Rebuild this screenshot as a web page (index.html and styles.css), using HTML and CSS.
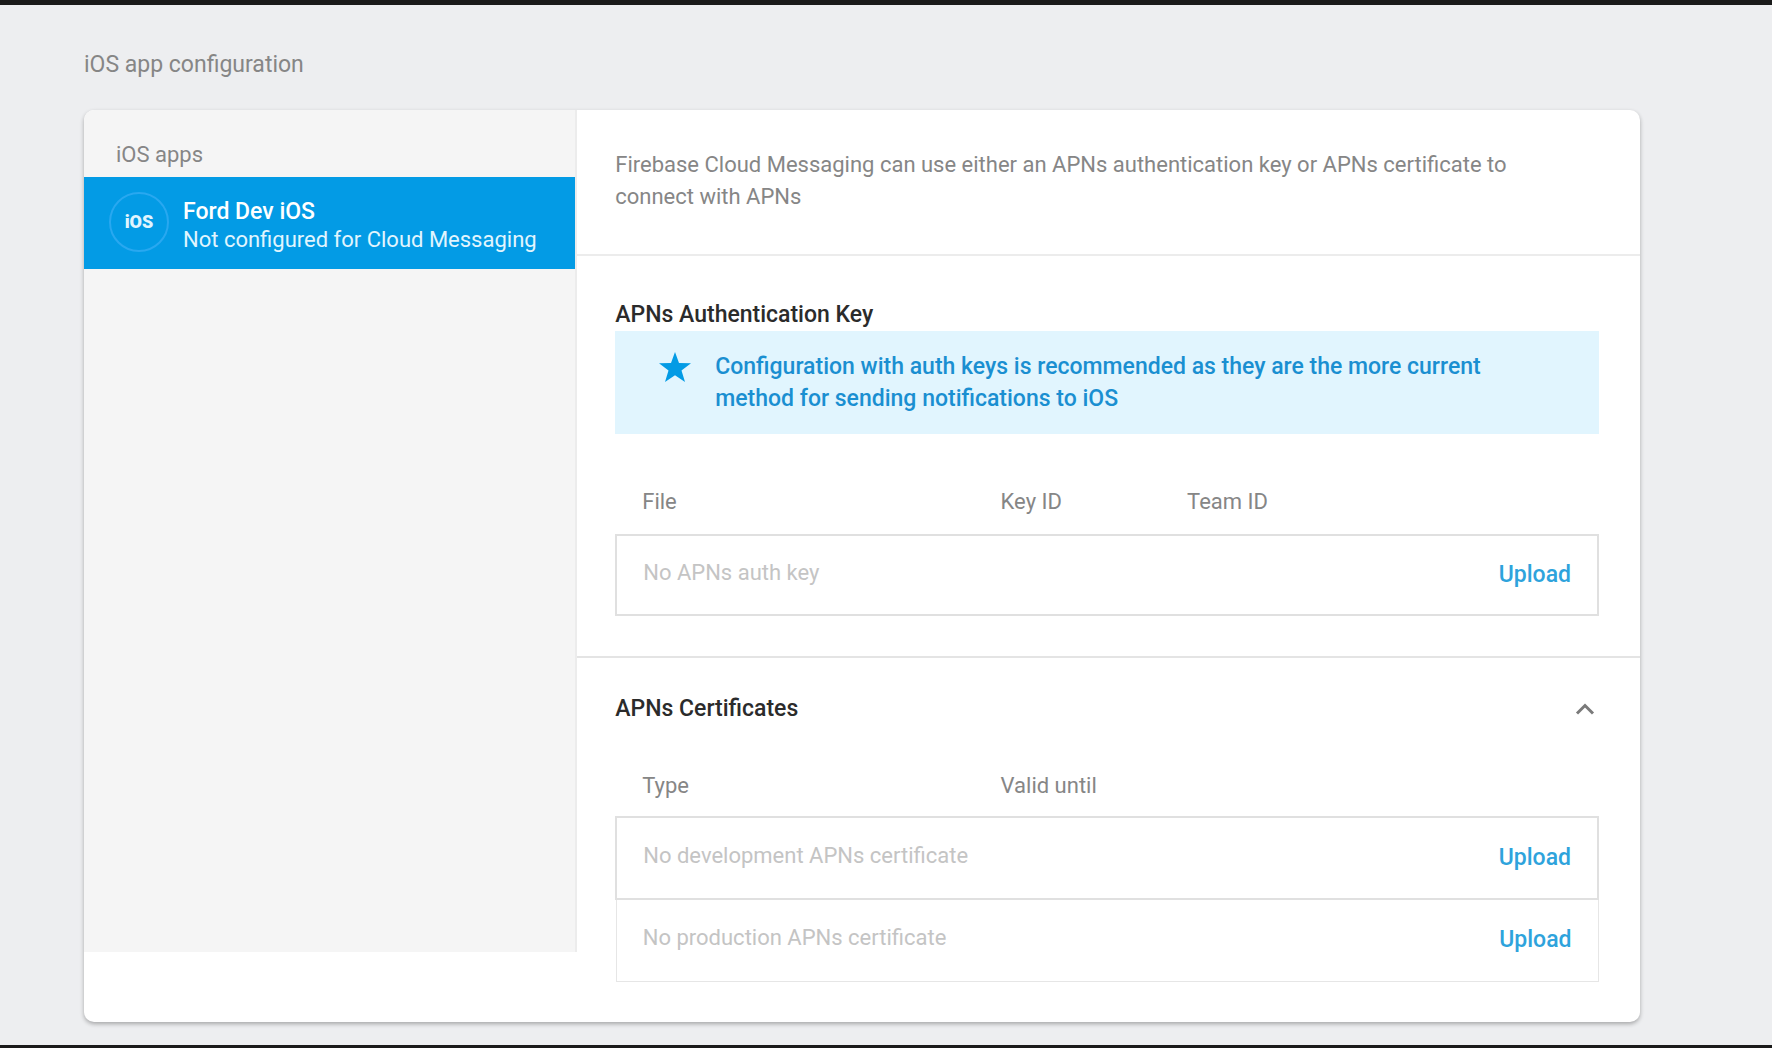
FILE: index.html
```html
<!doctype html>
<html lang="en">

<head>
    <meta charset="UTF-8">
    <meta name="viewport" content="width=device-width, initial-scale=1.0">
    <title>Cloud Messaging settings</title>
    <link rel="stylesheet" href="styles.css">
</head>

<body>
    <main class="page">
        <h1 class="page-title">iOS app configuration</h1>

        <div class="card">
            <!-- App list -->
            <nav class="sidebar" aria-labelledby="apps-label">
                <h2 class="sidebar-title" id="apps-label">iOS apps</h2>
                <a href="#" class="app active">
                    <span class="app-icon">iOS</span>
                    <span class="app-info">
                        <span class="app-name">Ford Dev iOS</span>
                        <span class="app-status">Not configured for Cloud Messaging</span>
                    </span>
                </a>
            </nav>

            <div class="content">
                <section class="intro">
                    <p>Firebase Cloud Messaging can use either an APNs authentication key or APNs certificate to connect with APNs</p>
                </section>

                <!-- Authentication key -->
                <section class="auth-key">
                    <h3>APNs Authentication Key</h3>
                    <div class="banner">
                        <svg class="star" viewBox="0 0 32 30" aria-hidden="true">
                            <path d="M16 0l4 11 12 .3-9.500 7.200L26 30l-10-6.700L6 30l3.500-11.500L0 11.300l12-.3z" />
                        </svg>
                        <p>Configuration with auth keys is recommended as they are the more current method for sending notifications to iOS</p>
                    </div>
                    <table>
                        <thead>
                            <tr>
                                <th class="col-main">File</th>
                                <th class="col-id">Key ID</th>
                                <th>Team ID</th>
                                <th></th>
                            </tr>
                        </thead>
                        <tbody>
                            <tr>
                                <td colspan="3">No APNs auth key</td>
                                <td class="action"><button type="button">Upload</button></td>
                            </tr>
                        </tbody>
                    </table>
                </section>

                <!-- Certificates -->
                <section class="certificates">
                    <div class="section-head">
                        <h3>APNs Certificates</h3>
                        <button type="button" class="toggle" aria-label="Collapse" aria-expanded="true">
                            <svg viewBox="0 0 20 12" aria-hidden="true">
                                <path d="M2 10.500l8-8 8 8" />
                            </svg>
                        </button>
                    </div>
                    <table>
                        <thead>
                            <tr>
                                <th class="col-main">Type</th>
                                <th>Valid until</th>
                                <th></th>
                            </tr>
                        </thead>
                        <tbody>
                            <tr>
                                <td colspan="2">No development APNs certificate</td>
                                <td class="action"><button type="button">Upload</button></td>
                            </tr>
                            <tr class="light">
                                <td colspan="2">No production APNs certificate</td>
                                <td class="action"><button type="button">Upload</button></td>
                            </tr>
                        </tbody>
                    </table>
                </section>
            </div>
        </div>
    </main>
</body>

</html>
```
FILE: styles.css
```css
* {
    box-sizing: border-box;
}

body {
    margin: 0;
    min-height: 100vh;
    border-top: 5px solid #1a1a1a;
    border-bottom: 3px solid #1a1a1a;
    background-color: #edeef0;
    color: #868686;
    font-family: Roboto, sans-serif;
    font-size: 22px;
    line-height: 32px;
}

h1,
h2,
h3,
p {
    margin: 0;
    font-size: 22px;
    font-weight: 400;
}

h3 {
    color: #2b2b2b;
    font-size: 23px;
    font-weight: 500;
}

button {
    padding: 0;
    border: none;
    background: none;
    font: inherit;
    cursor: pointer;
}

.page {
    padding: 44px 132px 22px 84px;
}

.page-title {
    margin-bottom: 29px;
    font-size: 23px;
}

.card {
    display: grid;
    grid-template-columns: 31.7% 1fr;
    border-radius: 10px;
    background-color: #fff;
    box-shadow: 0 2px 4px rgba(0, 0, 0, 0.3);
}

/* App list */
.sidebar {
    margin-bottom: 70px;
    border-right: 2px solid #ececec;
    border-radius: 10px 0 0 0;
    background-color: #f5f5f5;
}

.sidebar-title {
    padding: 29px 32px 6px;
}

.app {
    display: flex;
    align-items: flex-start;
    gap: 14px;
    padding: 15px 25px;
    color: #e1f5fe;
    line-height: 28px;
    text-decoration: none;
}

.app.active {
    background-color: #039be5;
}

.app-icon {
    display: flex;
    flex-shrink: 0;
    align-items: center;
    justify-content: center;
    width: 60px;
    height: 60px;
    border: 2px solid #29a8f0;
    border-radius: 50%;
    font-size: 18px;
    font-weight: 900;
}

.app-info {
    display: flex;
    flex-direction: column;
    padding-top: 6px;
}

.app-name {
    color: #fff;
    font-size: 23px;
    font-weight: 500;
}

/* Right side */
.intro {
    padding: 39px 80px 41px 38px;
    border-bottom: 2px solid #ececec;
}

.auth-key {
    padding: 43px 41px 40px 38px;
    border-bottom: 2px solid #e4e4e4;
}

.certificates {
    padding: 35px 41px 40px 38px;
}

.banner {
    display: flex;
    gap: 24px;
    padding: 20px 44px 19px;
    background-color: #e1f5fe;
    color: #1a8fd1;
}

.banner p {
    font-size: 23px;
    font-weight: 500;
}

.star {
    flex-shrink: 0;
    width: 32px;
    height: 32px;
    fill: #039be5;
}

.section-head {
    display: flex;
    align-items: center;
    justify-content: space-between;
}

.toggle {
    display: flex;
    padding: 4px;
}

.toggle svg {
    width: 20px;
    height: 12px;
    fill: none;
    stroke: #7a7a7a;
    stroke-width: 3;
}

/* Tables */
table {
    width: 100%;
    margin-top: 44px;
    border-collapse: collapse;
}

th {
    padding: 8px 26px 16px;
    font-weight: 400;
    text-align: left;
}

.col-main {
    width: 36.5%;
}

.col-id {
    width: 19%;
}

tbody tr {
    border: 2px solid #e0e0e0;
}

tbody tr.light {
    border: 1px solid #e6e6e6;
}

td {
    height: 80px;
    padding: 0 26px 4px;
    color: #c4c4c4;
}

td.action {
    padding-bottom: 0;
    text-align: right;
}

.action button {
    color: #2ea3dc;
    font-size: 23px;
    font-weight: 500;
}

.certificates table {
    margin-top: 37px;
}

.certificates th {
    padding-bottom: 14px;
}

.certificates td {
    height: 82px;
}
```
